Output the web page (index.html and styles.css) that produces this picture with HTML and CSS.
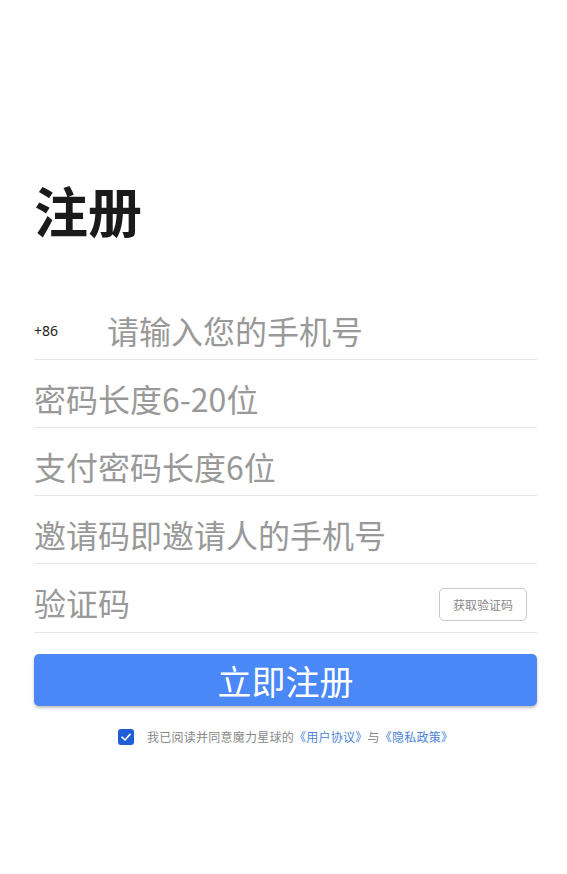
FILE: index.html
```html
<!DOCTYPE html>
<html lang="zh-CN">
<head>
<meta charset="utf-8">
<title>注册</title>
<link rel="stylesheet" href="styles.css">
</head>
<body>
<main class="page">
  <h1 class="title">注册</h1>
  <div class="form">
    <div class="row">
      <span class="prefix">+86</span>
      <span class="ph">请输入您的手机号</span>
    </div>
    <div class="row"><span class="ph">密码长度6-20位</span></div>
    <div class="row"><span class="ph">支付密码长度6位</span></div>
    <div class="row"><span class="ph">邀请码即邀请人的手机号</span></div>
    <div class="row row-last">
      <span class="ph grow">验证码</span>
      <span class="code-btn">获取验证码</span>
    </div>
  </div>
  <div class="submit">立即注册</div>
  <div class="agree">
    <span class="check">
      <svg width="16" height="16" viewBox="0 0 16 16"><rect x="0" y="0" width="16" height="16" rx="3" fill="#1f5ed6"/><path d="M4 8.2 L7 11 L12 5.4" fill="none" stroke="#fff" stroke-width="1.6" stroke-linecap="round" stroke-linejoin="round"/></svg>
    </span>
    <span class="agree-text">我已阅读并同意魔力星球的<span class="link">《用户协议》</span>与<span class="link">《隐私政策》</span></span>
  </div>
</main>
</body>
</html>
```
FILE: styles.css
```css
* { box-sizing: border-box; }
html, body { margin: 0; padding: 0; background: #fff; }
body {
  font-family: "Noto Sans CJK SC", "Noto Sans", sans-serif;
  width: 567px;
  height: 874px;
  overflow: hidden;
}
.page {
  padding: 180px 30px 0 34px;
}
.title {
  margin: 0;
  font-size: 54px;
  line-height: 60px;
  font-weight: 700;
  color: #1a1a1a;
}
.form {
  margin-top: 52px;
}
.row {
  height: 68px;
  padding-top: 8px;
  border-bottom: 1px solid #e6e6e6;
  display: flex;
  align-items: center;
}
.row-last { height: 69px; }
.prefix {
  width: 73px;
  margin-top: 2px;
  font-size: 14px;
  color: #222;
  font-family: "Noto Sans", sans-serif;
}
.ph {
  font-size: 32px;
  color: #999;
  line-height: 40px;
}
.grow { flex: 1; }
.code-btn {
  width: 88px;
  height: 33px;
  margin-top: 4px;
  margin-right: 10px;
  border: 1px solid #c8c8c8;
  border-radius: 5px;
  font-size: 12px;
  color: #888;
  display: flex;
  align-items: center;
  justify-content: center;
}
.submit {
  margin-top: 21px;
  height: 52px;
  border-radius: 5px;
  background: #4a88f7;
  box-shadow: 0 2px 3px rgba(0,0,0,0.25);
  color: #fff;
  font-size: 34px;
  display: flex;
  align-items: center;
  justify-content: center;
}
.agree {
  margin-top: 22px;
  display: flex;
  align-items: center;
  padding-left: 84px;
}
.check { display: flex; width: 16px; height: 16px; }
.agree-text {
  margin-left: 13px;
  font-size: 12px;
  letter-spacing: 0.25px;
  color: #888;
}
.link { color: #4a7fd6; }
```
